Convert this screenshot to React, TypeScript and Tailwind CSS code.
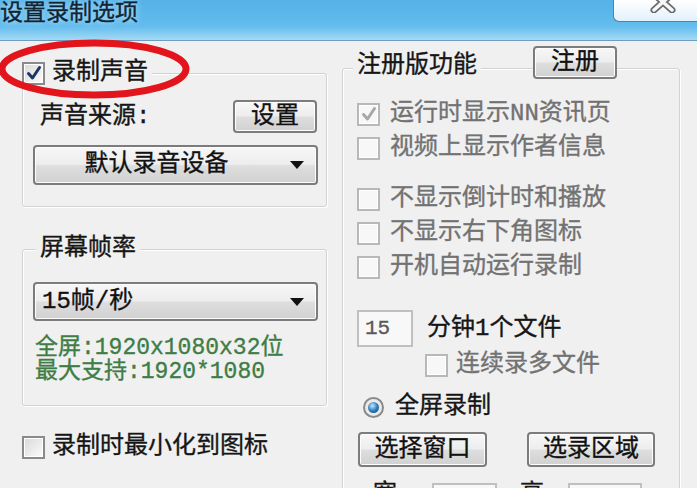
import type { ReactNode } from 'react';

const Check = ({ checked = false, disabled = false }: { checked?: boolean; disabled?: boolean }) => (
  <span
    className={
      disabled
        ? 'flex h-[23px] w-[23px] shrink-0 items-center justify-center border-2 border-[#b8b8b8] bg-[#f7f7f7] shadow-[inset_0_0_0_1px_#fff]'
        : 'flex h-[23px] w-[23px] shrink-0 items-center justify-center border-2 border-[#8a8a8a] bg-gradient-to-br from-[#d9d9d9] to-[#fbfbfb] shadow-[inset_0_0_0_1px_#fff]'
    }
  >
    {checked && (
      <svg width="16" height="16" viewBox="0 0 16 16">
        <path
          d="M2.5 8.5 L6.5 13 L13.5 2.5"
          fill="none"
          stroke={disabled ? '#a8a8a8' : '#1c3664'}
          strokeWidth="3"
          strokeLinecap="round"
          strokeLinejoin="round"
        />
      </svg>
    )}
  </span>
);

const Btn = ({ children, className = '' }: { children: ReactNode; className?: string }) => (
  <div
    className={`flex items-center justify-center rounded-[4px] border-2 border-[#7c7c7c] bg-[linear-gradient(to_bottom,#f7f7f7,#ededed_48%,#dedede_52%,#d1d1d1)] shadow-[inset_0_0_0_1px_#fdfdfd] text-[#111] ${className}`}
  >
    {children}
  </div>
);

const Arrow = () => (
  <svg width="14" height="8" viewBox="0 0 14 8">
    <path d="M0 0 H14 L7 8 Z" fill="#111" />
  </svg>
);

const GroupBox = ({ children, className = '' }: { children: ReactNode; className?: string }) => (
  <div
    className={`rounded-[3px] border border-[#d2d2d2] shadow-[inset_1px_1px_0_#ffffff,1px_1px_0_#ffffff] ${className}`}
  >
    {children}
  </div>
);

export default function App() {
  return (
    <div className="relative h-[488px] w-[697px] overflow-hidden bg-[#f0f0f0] font-['Liberation_Mono','Noto_Sans_CJK_SC',monospace] text-[24px] leading-none text-[#161616] [-webkit-text-stroke:0.35px]">
      {/* Title bar */}
      <div className="flex h-[41px] items-start justify-between border-b border-[#6f9cbd] bg-[linear-gradient(to_bottom,#55b2e7,#62bced_65%,#a4daf5)]">
        <span className="mt-[2px] text-[23px] leading-[25px] text-[#0f2536] [text-shadow:0_0_6px_#d8f0ff]">
          设置录制选项
        </span>
        <div className="flex h-[22px] w-[84px] items-start justify-center overflow-hidden rounded-bl-[6px] border-b border-l border-[#5d7f97] bg-[linear-gradient(to_bottom,#ffffff,#e2f1fb)] pl-[14px]">
          <svg width="28" height="22" viewBox="0 0 28 22" className="-mt-[9px]">
            <path d="M5 3 L23 19 M23 3 L5 19" stroke="#6b6b6b" strokeWidth="7" strokeLinecap="round" />
            <path d="M5 3 L23 19 M23 3 L5 19" stroke="#f5f7f9" strokeWidth="3.5" strokeLinecap="round" />
          </svg>
        </div>
      </div>

      <div className="flex">
        {/* Left column */}
        <div className="w-[342px] shrink-0 pt-[32px]">
          <GroupBox className="ml-[22px] h-[134px] w-[305px]">
            <div className="-ml-px -mt-[13px] flex h-[24px] w-fit items-center bg-[#f0f0f0] pr-[4px]">
              <Check checked />
              <span className="ml-[7px]">录制声音</span>
            </div>
            <div className="mt-[15px] flex h-[33px] items-center justify-between pl-[17px] pr-[9px]">
              <span>声音来源:</span>
              <Btn className="h-[33px] w-[84px]">设置</Btn>
            </div>
            <Btn className="ml-[10px] mt-[12px] h-[40px] w-[285px] !justify-start">
              <span className="flex-1 text-center">默认录音设备</span>
              <span className="flex w-[38px] justify-center">
                <Arrow />
              </span>
            </Btn>
          </GroupBox>

          <GroupBox className="ml-[22px] mt-[42px] h-[157px] w-[305px]">
            <div className="-mt-[13px] ml-[13px] flex h-[24px] w-fit items-center bg-[#f0f0f0] px-[4px]">
              屏幕帧率
            </div>
            <Btn className="ml-[10px] mt-[21px] h-[39px] w-[285px] !justify-start">
              <span className="flex-1 pl-[7px]">15帧/秒</span>
              <span className="flex w-[38px] justify-center">
                <Arrow />
              </span>
            </Btn>
            <div className="ml-[12px] mt-[15px] text-[23px] leading-[24px] text-[#3f7d46]">
              <div>全屏:1920x1080x32位</div>
              <div>最大支持:1920*1080</div>
            </div>
          </GroupBox>

          <div className="ml-[22px] mt-[29px] flex h-[24px] items-center">
            <Check />
            <span className="ml-[7px]">录制时最小化到图标</span>
          </div>
        </div>

        {/* Right column */}
        <div className="flex-1 pt-[27px]">
          <GroupBox className="h-[600px] w-[338px]">
            <div className="-mt-[23px] flex h-[33px] items-center pl-[10px]">
              <span className="mt-[7px] bg-[#f0f0f0] px-[4px]">注册版功能</span>
              <Btn className="ml-[52px] h-[33px] w-[84px]">注册</Btn>
            </div>

            <div className="mt-[18px] pl-[14px] text-[#727272]">
              <div className="flex h-[34px] items-center">
                <Check checked disabled />
                <span className="ml-[10px]">运行时显示NN资讯页</span>
              </div>
              <div className="flex h-[34px] items-center">
                <Check disabled />
                <span className="ml-[10px]">视频上显示作者信息</span>
              </div>
              <div className="mt-[17px] flex h-[34px] items-center">
                <Check disabled />
                <span className="ml-[10px]">不显示倒计时和播放</span>
              </div>
              <div className="flex h-[34px] items-center">
                <Check disabled />
                <span className="ml-[10px]">不显示右下角图标</span>
              </div>
              <div className="flex h-[34px] items-center">
                <Check disabled />
                <span className="ml-[10px]">开机自动运行录制</span>
              </div>
            </div>

            <div className="mt-[26px] flex items-center pl-[14px]">
              <div className="flex h-[37px] w-[56px] items-center border-2 border-[#c0c0c0] bg-[#f8f8f8] pl-[6px] text-[21px] text-[#5a5a5a]">
                15
              </div>
              <span className="ml-[14px]">分钟1个文件</span>
            </div>

            <div className="mt-[6px] flex h-[24px] items-center pl-[82px] text-[#727272]">
              <Check disabled />
              <span className="ml-[8px]">连续录多文件</span>
            </div>

            <div className="mt-[18px] flex h-[24px] items-center pl-[20px]">
              <span className="flex h-[21px] w-[21px] items-center justify-center rounded-full border-2 border-[#8a8a8a] bg-[#eaeaea]">
                <span className="h-[11px] w-[11px] rounded-full bg-[radial-gradient(circle_at_40%_35%,#c4e8ff,#2f7fbf_50%,#0f3d69)]" />
              </span>
              <span className="ml-[11px]">全屏录制</span>
            </div>

            <div className="mt-[13px] flex gap-[40px] pl-[15px]">
              <Btn className="h-[35px] w-[129px]">选择窗口</Btn>
              <Btn className="h-[35px] w-[128px]">选录区域</Btn>
            </div>

            <div className="mt-[16px] flex items-start pl-[30px]">
              <span>宽</span>
              <div className="ml-[35px] h-[30px] w-[65px] border-2 border-[#c0c0c0] bg-[#f8f8f8]" />
              <span className="ml-[23px]">高</span>
              <div className="ml-[24px] h-[30px] w-[74px] border-2 border-[#c0c0c0] bg-[#f8f8f8]" />
            </div>
          </GroupBox>
        </div>
      </div>

      {/* Red annotation ellipse */}
      <svg
        className="pointer-events-none absolute left-0 top-0"
        width="200"
        height="110"
        viewBox="0 0 200 110"
      >
        <ellipse cx="94" cy="69" rx="92" ry="26" fill="none" stroke="#e2141c" strokeWidth="7" />
      </svg>
    </div>
  );
}
